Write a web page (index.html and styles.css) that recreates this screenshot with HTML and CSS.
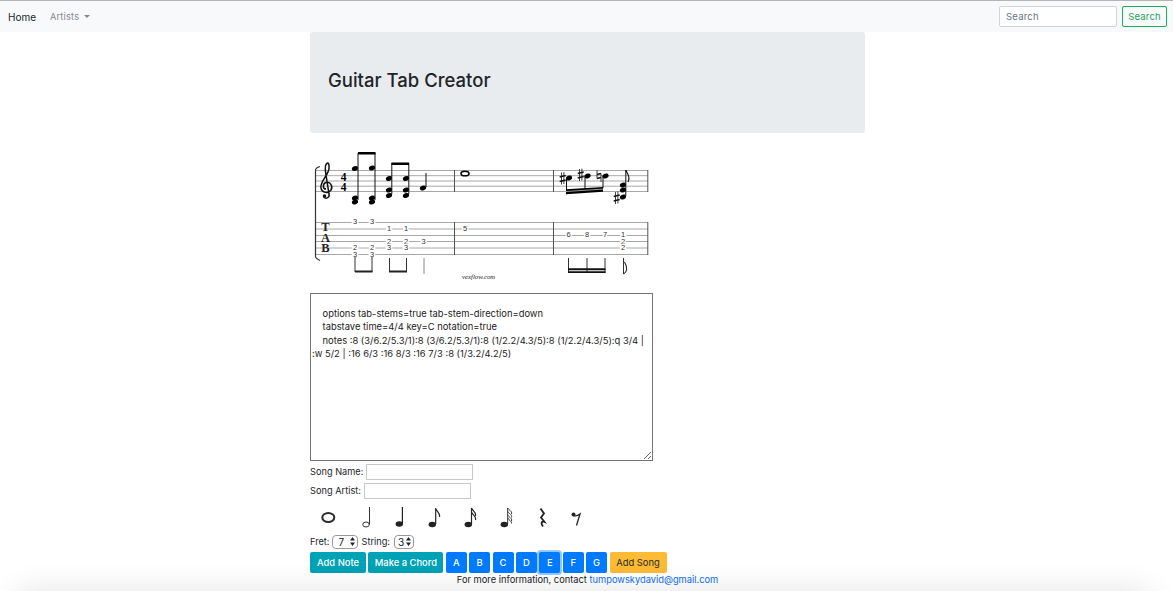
FILE: index.html
```html
<!DOCTYPE html>
<html lang="en">
<head>
<meta charset="utf-8">
<title>Guitar Tab Creator</title>
<link rel="stylesheet" href="styles.css">
</head>
<body>
<nav class="navbar">
  <a class="nav-home" href="#">Home</a>
  <a class="nav-artists" href="#">Artists<span class="caret"></span></a>
  <form class="nav-search">
    <input class="search-input" type="text" placeholder="Search">
    <button class="search-btn" type="button">Search</button>
  </form>
</nav>
<main class="page">
  <header class="jumbotron"><h1>Guitar Tab Creator</h1></header>
  <svg class="score" viewBox="310 145 345 140" width="345" height="140">
    <defs>
      <ellipse id="h" rx="3.200" ry="2.300" transform="rotate(-22)" fill="#000"/>
      <g id="sharp" fill="none" stroke="#111">
        <path d="M-1.200 -6V6M1.200 -6.500V5.500" stroke-width=".8"/>
        <path d="M-3 -1.500L3 -3M-3 3L3 1.500" stroke-width="1.500"/>
      </g>
      <g id="natural" fill="none" stroke="#111">
        <path d="M-2 -6V2.500M2 6V-2.500" stroke-width=".8"/>
        <path d="M-2 -1.500L2 -2.500M-2 2.500L2 1.500" stroke-width="1.400"/>
      </g>
    </defs>
    <g stroke="#a8a8a8" stroke-width="1">
      <path d="M315 170.500H648M315 175.700H648M315 181H648M315 186.200H648M315 191.500H648"/>
      <path d="M315 222.500H648M315 229H648M315 235.500H648M315 241.500H648M315 248H648M315 254.500H648"/>
    </g>
    <path d="M454.500 170V192M553.500 170V192M647.800 170V192M454.500 222V255M553.500 222V255M647.800 222V255" stroke="#555" stroke-width="1"/>
    <path d="M320 166.500C317 167.500 315.500 168 315.500 170V256.500C315.500 258 317 259 320 260.500" fill="none" stroke="#333" stroke-width="1.200"/>
    <path d="M326 189C322.500 189 322.500 183.500 326 182.500C331 181.500 333 187 331 190C328 194 322 193 321 188C320 183 326 177 328 172C330 167 329 163 327.500 163C325 164 325 170 326 175L329 194C330 198 325 199.500 323.500 196.500" fill="none" stroke="#111" stroke-width="1.500"/>
    <circle cx="324.500" cy="196" r="1.800" fill="#111"/>
    <text class="time" x="343.500" y="180.500">4</text>
    <text class="time" x="343.500" y="190.500">4</text>
    <g class="clef-tab">
      <text x="325.500" y="231">T</text>
      <text x="325.500" y="241.500">A</text>
      <text x="325.500" y="252">B</text>
    </g>

    <!-- notes -->
    <g fill="#000">
      <use href="#h" x="355" y="168.500"/><use href="#h" x="355" y="198"/><use href="#h" x="355" y="202"/>
      <use href="#h" x="372" y="168"/><use href="#h" x="372" y="198"/><use href="#h" x="372" y="202"/>
      <use href="#h" x="389" y="178.500"/><use href="#h" x="389" y="190"/><use href="#h" x="389" y="195.500"/>
      <use href="#h" x="406" y="178.500"/><use href="#h" x="406" y="190"/><use href="#h" x="406" y="195.500"/>
      <use href="#h" x="423" y="188"/>
      <use href="#h" x="569" y="178"/><use href="#h" x="587.500" y="176"/><use href="#h" x="605.500" y="176"/>
      <use href="#h" x="623" y="185"/><use href="#h" x="623" y="190"/><use href="#h" x="623" y="197"/>
    </g>
    <ellipse cx="465" cy="173.500" rx="4" ry="2.300" fill="none" stroke="#000" stroke-width="1.600"/>
    <g stroke="#111" stroke-width="1" fill="none">
      <path d="M358 153V200M375 153V200M391.800 163V194M408.800 163V194M426 173V187"/>
      <path d="M566.500 178V191M585 176V190M603 176V188M625.800 170V196"/>
      <path d="M625.800 170C627 174 631 176 628 182" stroke-width="1.200"/>
    </g>
    <path d="M358 152H375.500V154.500H358ZM391.500 162.500H409V165H391.500Z" fill="#000"/>
    <path d="M566 189.300L603 186.900V191.700L566 194.200Z" fill="#000"/>
    <path d="M566 191.500L603 189.100" stroke="#fff" stroke-width=".6"/>
    <use href="#sharp" x="562.700" y="178.500"/>
    <use href="#sharp" x="580.700" y="175"/>
    <use href="#natural" x="599" y="176"/>
    <use href="#sharp" x="616.700" y="198"/>

    <!-- tab numbers -->
    <g class="fret">
      <text x="355" y="224">3</text><text x="372" y="224">3</text>
      <text x="389" y="230.500">1</text><text x="406" y="230.500">1</text>
      <text x="355" y="250">2</text><text x="355" y="256.500">3</text>
      <text x="372" y="250">2</text><text x="372" y="256.500">3</text>
      <text x="389" y="243.500">2</text><text x="389" y="250">3</text>
      <text x="406" y="243.500">2</text><text x="406" y="250">3</text>
      <text x="423.500" y="243.500">3</text>
      <text x="465" y="230.500">5</text>
      <text x="568.500" y="237">6</text><text x="587" y="237">8</text><text x="605" y="237">7</text>
      <text x="623" y="237">1</text><text x="623" y="243.500">2</text><text x="623" y="250">2</text>
    </g>

    <!-- tab stems -->
    <g stroke="#333" stroke-width="1" fill="none">
      <path d="M355 257V272M372 257V272M389.500 258V272M406.500 258V272"/>
      <path d="M568.500 258V273M587 258V273M605 258V273M623.500 258V274"/>
      <path d="M623.500 274C627 272 628 268 624.500 262" stroke-width="1.200"/>
      <path d="M424 258V274" stroke="#888"/>
    </g>
    <path d="M355 270.500H372.500V272.500H355ZM389 270.500H407V272.500H389Z" fill="#222"/>
    <path d="M568 268.300H605.500V270.200H568ZM568 271.200H605.500V273H568Z" fill="#111"/>
    <text class="brand" x="462" y="278.500">vexflow.com</text>
  </svg>

  <textarea class="tab-source" spellcheck="false">

    options tab-stems=true tab-stem-direction=down
    tabstave time=4/4 key=C notation=true
    notes :8 (3/6.2/5.3/1):8 (3/6.2/5.3/1):8 (1/2.2/4.3/5):8 (1/2.2/4.3/5):q 3/4 | :w 5/2 | :16 6/3 :16 8/3 :16 7/3 :8 (1/3.2/4.2/5)</textarea>

  <div class="field"><label>Song Name:</label><input class="text-field" type="text"></div>
  <div class="field"><label>Song Artist:</label><input class="text-field" type="text"></div>

  <div class="durations">
    <svg class="dur" viewBox="0 0 36 26"><ellipse cx="18.300" cy="12.500" rx="6" ry="4.500" fill="none" stroke="#2b2b2b" stroke-width="2"/></svg>
    <svg class="dur" viewBox="0 0 36 26"><ellipse cx="20" cy="19.500" rx="3.200" ry="2.500" fill="none" stroke="#333" stroke-width="1"/><path d="M23.500 19.500V2" stroke="#333" stroke-width="1"/></svg>
    <svg class="dur" viewBox="0 0 36 26"><ellipse cx="17.300" cy="19" rx="3.700" ry="2.800" fill="#222"/><path d="M20.400 19V2" stroke="#222" stroke-width="1.200"/></svg>
    <svg class="dur" viewBox="0 0 36 26"><ellipse cx="14.300" cy="19.500" rx="3.700" ry="2.800" fill="#222"/><path d="M17.700 19V3C18.500 7 22.500 8 21.500 12" fill="none" stroke="#222" stroke-width="1.200"/></svg>
    <svg class="dur" viewBox="0 0 36 26"><ellipse cx="14.300" cy="19.500" rx="3.700" ry="2.800" fill="#222"/><path d="M17.500 19V3C18.500 6 22.500 7 21.500 11M17.500 7C18.500 10 22.500 11 21.500 15" fill="none" stroke="#222" stroke-width="1.200"/></svg>
    <svg class="dur" viewBox="0 0 36 26"><ellipse cx="14.300" cy="19.500" rx="3.700" ry="2.800" fill="#222"/><path d="M17.700 19V3C18.500 5 22.500 6 21.500 9M17.700 6.500C18.500 8.500 22.500 9.500 21.500 12.500M17.700 10C18.500 12 22.500 13 21.500 16M17.700 13C18.500 15 22 16 21.500 18.500" fill="none" stroke="#333" stroke-width="1"/></svg>
    <svg class="dur" viewBox="0 0 36 26"><path d="M14.500 3.500L18 8.500L15 12.500L18.500 17C15.500 16 14.500 18 17 21.500" fill="none" stroke="#222" stroke-width="1.800"/></svg>
    <svg class="dur" viewBox="0 0 36 26"><circle cx="11.500" cy="9.500" r="2" fill="#222"/><path d="M11.500 10.500C13.500 11.500 15.500 11 18 9L14.500 20.500" fill="none" stroke="#222" stroke-width="1.300"/></svg>
  </div>

  <div class="selects">
    <label>Fret:</label>
    <select class="mini-select"><option>7</option></select>
    <label>String:</label>
    <select class="mini-select small"><option>3</option></select>
  </div>

  <div class="actions">
    <button class="btn teal" type="button">Add Note</button>
    <button class="btn teal" type="button">Make a Chord</button>
    <button class="btn key" type="button">A</button>
    <button class="btn key" type="button">B</button>
    <button class="btn key" type="button">C</button>
    <button class="btn key" type="button">D</button>
    <button class="btn key focus" type="button">E</button>
    <button class="btn key" type="button">F</button>
    <button class="btn key" type="button">G</button>
    <button class="btn warn" type="button">Add Song</button>
  </div>
</main>
<footer class="footer">For more information, contact <a href="#">tumpowskydavid@gmail.com</a></footer>
</body>
</html>
```
FILE: styles.css
```css
* { box-sizing: border-box; }
html, body { height: 591px; overflow: hidden; }
body {
  margin: 0;
  position: relative;
  background: #fff;
  color: #212529;
  font-family: Inter, "Liberation Sans", sans-serif;
  font-size: 10px;
}
a { text-decoration: none; }

.navbar {
  display: flex;
  align-items: center;
  height: 32px;
  padding: 0 6px 0 8px;
  background: #f8f9fa;
  border-top: 1px solid #b7b4b7;
}
.nav-home { color: #212529; font-size: 10px; }
.nav-artists { color: #85898e; font-size: 9.200px; margin-left: 14px; display: flex; align-items: center; letter-spacing: .2px; }
.caret {
  margin-left: 5px;
  border-top: 3px solid #85898e;
  border-left: 3px solid transparent;
  border-right: 3px solid transparent;
}
.nav-search { margin-left: auto; display: flex; gap: 5px; }
.search-input {
  width: 118px;
  height: 21px;
  padding: 0 6px;
  border: 1px solid #ced4da;
  border-radius: 2px;
  background: #fff;
  font: 9.500px Inter, sans-serif;
  letter-spacing: .2px;
}
.search-input::placeholder { color: #6c757d; opacity: 1; }
.search-btn {
  width: 45px;
  height: 21px;
  padding: 0;
  border: 1px solid #18b05a;
  border-radius: 2px;
  background: transparent;
  color: #28a25b;
  font: 9.500px Inter, sans-serif;
  letter-spacing: .2px;
}

.page { margin-left: 310px; width: 555px; display: flex; flex-direction: column; align-items: flex-start; }
.jumbotron {
  width: 555px;
  height: 101px;
  padding: 0 0 6px 18px;
  display: flex;
  align-items: center;
  background: #e9ecef;
  border-radius: 3px;
}
.jumbotron h1 { margin: 0; font-size: 18.500px; font-weight: 500; }

.score { display: block; margin-top: 12px; }
.time { font: bold 11.500px "Liberation Serif", serif; text-anchor: middle; fill: #000; }
.clef-tab text { font: bold 12.500px "Liberation Serif", serif; text-anchor: middle; fill: #222; }
.fret text {
  font: 7.500px "Liberation Sans", sans-serif;
  text-anchor: middle;
  fill: #333;
  paint-order: stroke;
  stroke: #fff;
  stroke-width: 3px;
}
.brand { font: italic 6.800px "Liberation Serif", serif; fill: #222; }

.tab-source {
  display: block;
  width: 343px;
  height: 168px;
  margin-top: 8px;
  padding: 0 1px;
  border: 1px solid #767676;
  border-radius: 0;
  font: 9.400px/13.200px Inter, sans-serif;
  color: #222;
  background: #fff;
  outline: none;
}

.field { display: flex; align-items: center; height: 19px; font-size: 9.200px; }
.field label { margin-right: 3px; letter-spacing: .02px; }
.text-field { width: 107px; height: 16px; padding: 0 2px; border: 1px solid #c9c9c9; background: #fff; }
.tab-source + .field { margin-top: 1px; }

.durations { display: flex; height: 26px; margin-top: 5px; }
.dur { display: block; width: 36px; height: 26px; }

.selects { display: flex; align-items: center; height: 15px; margin-top: 3px; gap: 3px; font-size: 9.200px; }
.mini-select {
  appearance: none;
  width: 26px;
  height: 14px;
  padding: 0 0 0 5px;
  border: 1px solid #999;
  border-radius: 4px;
  color: #222;
  font: 10px Inter, sans-serif;
  background: #fff url("data:image/svg+xml,%3Csvg xmlns='http://www.w3.org/2000/svg' width='7' height='9'%3E%3Cpath d='M3.500 0L6 3.500H1ZM3.500 9L1 5.500H6Z' fill='%23222'/%3E%3C/svg%3E") no-repeat right 1px center;
}
.mini-select.small { width: 20px; margin-left: 1px; padding-left: 3px; }

.actions { display: flex; gap: 2.400px; margin-top: 3px; }
.btn {
  height: 21px;
  padding: 0;
  border: 0;
  border-radius: 2px;
  color: #fff;
  font: 500 9.400px Inter, sans-serif;
}
.teal { background: #00a2b5; width: 56px; }
.teal + .teal { width: 75px; }
.key { background: #007bff; width: 21px; }
.focus { box-shadow: 0 0 0 2px rgba(38, 143, 255, .5); }
.warn { background: #fcbb35; color: #2b2b2b; width: 57px; font-weight: 400; }

.footer {
  position: absolute;
  left: 0;
  right: 0;
  bottom: 0;
  height: 36px;
  padding: 18px 0 0 2px;
  overflow: hidden;
  text-align: center;
  font-size: 9.300px;
  line-height: 13px;
  color: #212529;
  pointer-events: none;
}
.footer a { color: #0d6efd; }
.footer::after {
  content: "";
  position: absolute;
  left: 24px;
  right: 30px;
  top: 42px;
  height: 40px;
  box-shadow: 0 0 32px 6px rgba(0, 0, 0, .11);
}
```
